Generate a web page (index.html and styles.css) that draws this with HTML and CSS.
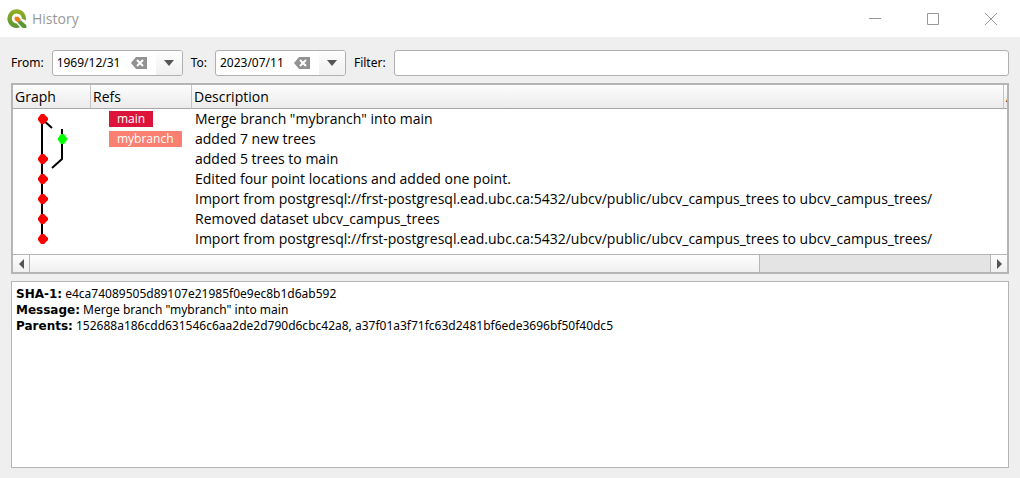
FILE: index.html
```
<!DOCTYPE html>
<html lang="en">
<head>
<meta charset="utf-8">
<title>History</title>
<link rel="stylesheet" href="styles.css">
</head>
<body>
<header class="titlebar">
  <svg class="logo" viewBox="0 0 20 20" aria-hidden="true">
    <defs><linearGradient id="ring" x1="0" y1="0" x2="0" y2="1"><stop offset="0" stop-color="#93b023"/><stop offset="1" stop-color="#589632"/></linearGradient></defs>
    <path fill="url(#ring)" d="M13 18.3A9.3 9.3 0 1 1 18.8 11.5L14.8 9.5A5 5 0 1 0 9.6 14.4Z"/>
    <path fill="#589632" d="M11.5 11.5h2.6l5.3 4.7v2.9h-3.7l-4.7-5z"/>
    <path fill="#ee7913" d="M7.7 7.7h3.5l2.6 2.8-3 3L7.7 11z"/>
  </svg>
  <h1 class="title">History</h1>
  <div class="window-controls">
    <button class="window-button" type="button" aria-label="Minimize"><svg width="12" height="12"><path d="M0 5.5h12"/></svg></button>
    <button class="window-button" type="button" aria-label="Maximize"><svg width="12" height="12"><path d="M.5.5h11v11H.5z"/></svg></button>
    <button class="window-button" type="button" aria-label="Close"><svg width="12" height="12"><path d="M0 0l12 12M12 0L0 12"/></svg></button>
  </div>
</header>
<main class="content">
  <form class="filters">
    <label for="from">From:</label>
    <div class="date">
      <input id="from" class="date-input" type="text" value="1969/12/31">
      <button class="clear" type="button" aria-label="Clear from date"><svg width="16" height="12"><path fill="#929292" d="M5 0h11v12H5L0 6z"/><path stroke="#fff" stroke-width="2" d="M6 3l6 6M12 3l-6 6"/></svg></button>
      <button class="drop" type="button" aria-label="Choose from date"><svg width="10" height="6"><path fill="#555" d="M0 0h10L5 6z"/></svg></button>
    </div>
    <label for="to">To:</label>
    <div class="date">
      <input id="to" class="date-input" type="text" value="2023/07/11">
      <button class="clear" type="button" aria-label="Clear to date"><svg width="16" height="12"><path fill="#929292" d="M5 0h11v12H5L0 6z"/><path stroke="#fff" stroke-width="2" d="M6 3l6 6M12 3l-6 6"/></svg></button>
      <button class="drop" type="button" aria-label="Choose to date"><svg width="10" height="6"><path fill="#555" d="M0 0h10L5 6z"/></svg></button>
    </div>
    <label for="filter">Filter:</label>
    <input id="filter" class="filter-input" type="text">
  </form>
  <section class="log">
    <table class="commits">
      <colgroup><col class="col-graph"><col class="col-refs"><col><col class="col-author"></colgroup>
      <thead><tr><th>Graph</th><th>Refs</th><th>Description</th><th>Author</th></tr></thead>
      <tbody>
        <tr><td><svg class="graph"><path class="edge" d="M29 10v10M29 10l10 9"/><path class="dot" d="M28 5h3l4 4v2l-4 4h-3l-3-4V9z"/></svg></td><td><span class="ref ref-main">main</span></td><td>Merge branch "mybranch" into main</td><td></td></tr>
        <tr><td><svg class="graph"><path class="edge" d="M29 0v20M49 0v20"/><path class="dot dot-branch" d="M48 5h3l3 4v2l-3 4h-3l-3-4V9z"/></svg></td><td><span class="ref ref-branch">mybranch</span></td><td>added 7 new trees</td><td></td></tr>
        <tr><td><svg class="graph"><path class="edge" d="M29 0v20M49 0v10l-10 9"/><path class="dot" d="M28 5h3l4 4v2l-4 4h-3l-3-4V9z"/></svg></td><td></td><td>added 5 trees to main</td><td></td></tr>
        <tr><td><svg class="graph"><path class="edge" d="M29 0v20"/><path class="dot" d="M28 5h3l4 4v2l-4 4h-3l-3-4V9z"/></svg></td><td></td><td>Edited four point locations and added one point.</td><td></td></tr>
        <tr><td><svg class="graph"><path class="edge" d="M29 0v20"/><path class="dot" d="M28 5h3l4 4v2l-4 4h-3l-3-4V9z"/></svg></td><td></td><td>Import from postgresql://frst-postgresql.ead.ubc.ca:5432/ubcv/public/ubcv_campus_trees to ubcv_campus_trees/</td><td></td></tr>
        <tr><td><svg class="graph"><path class="edge" d="M29 0v20"/><path class="dot" d="M28 5h3l4 4v2l-4 4h-3l-3-4V9z"/></svg></td><td></td><td>Removed dataset ubcv_campus_trees</td><td></td></tr>
        <tr><td><svg class="graph"><path class="edge" d="M29 0v10"/><path class="dot" d="M28 5h3l4 4v2l-4 4h-3l-3-4V9z"/></svg></td><td></td><td>Import from postgresql://frst-postgresql.ead.ubc.ca:5432/ubcv/public/ubcv_campus_trees to ubcv_campus_trees/</td><td></td></tr>
      </tbody>
    </table>
    <div class="scrollbar">
      <button class="scroll-button" type="button" aria-label="Scroll left"><svg width="5" height="10"><path fill="#555" d="M5 0v10L0 5z"/></svg></button>
      <div class="track"><div class="thumb"></div></div>
      <button class="scroll-button scroll-right" type="button" aria-label="Scroll right"><svg width="5" height="10"><path fill="#555" d="M0 0v10l5-5z"/></svg></button>
    </div>
  </section>
  <section class="details">
    <p><b>SHA-1:</b> e4ca74089505d89107e21985f0e9ec8b1d6ab592</p>
    <p><b>Message:</b> Merge branch "mybranch" into main</p>
    <p><b>Parents:</b> 152688a186cdd631546c6aa2de2d790d6cbc42a8, a37f01a3f71fc63d2481bf6ede3696bf50f40dc5</p>
  </section>
</main>
</body>
</html>
```
FILE: styles.css
```
* { box-sizing: border-box; }
body {
  margin: 0;
  min-height: 100vh;
  display: flex;
  flex-direction: column;
  background: #efefef;
  color: #000;
  font: 12px/16px "Noto Sans", "Open Sans", sans-serif;
}
button { padding: 0; border: 0; background: none; display: flex; align-items: center; justify-content: center; }
input { font: inherit; color: inherit; outline: 0; }
svg { display: block; }
.titlebar { display: flex; align-items: center; height: 37px; padding-left: 7px; background: #fff; }
.logo { width: 20px; height: 20px; }
.title { margin: 0 0 0 5px; font: 14px/20px "Open Sans", sans-serif; color: #999; }
.window-controls { display: flex; margin-left: auto; height: 100%; }
.window-button { width: 58px; }
.window-button path { fill: none; stroke: #999; }
.content { flex: 1; display: flex; flex-direction: column; padding: 13px 11px 10px; }
.filters { display: flex; align-items: center; gap: 8px; }
.date { display: flex; width: 131px; height: 26px; border: 1px solid #b0b0b0; border-radius: 3px; background: #fff; overflow: hidden; }
.date-input { flex: 1; min-width: 0; padding: 0 0 0 4px; border: 0; background: none; }
.clear { width: 16px; margin-right: 9px; }
.drop { width: 26px; background: linear-gradient(#fdfdfd, #f0f0f0); }
.filter-input { flex: 1; min-width: 0; height: 26px; padding: 0 4px; border: 1px solid #b0b0b0; border-radius: 3px; background: #fff; }
.log { margin-top: 7px; border: 2px solid #b5b5b5; background: #fff; overflow: hidden; }
.commits { width: 100%; table-layout: fixed; border-collapse: separate; border-spacing: 0; margin-bottom: 5px; font: 14px/20px "Open Sans", sans-serif; }
.col-graph { width: 78px; }
.col-refs { width: 101px; }
.col-author { width: 3px; }
.commits th { height: 24px; padding: 2px 2px 1px; font-weight: 400; text-align: left; overflow: hidden; white-space: nowrap; background: linear-gradient(#fdfdfd, #ebebeb); border-right: 1px solid #c4c4c4; border-bottom: 1px solid #a8a8a8; }
.commits th:last-child { border-right: 0; padding-right: 0; }
.commits td { height: 20px; padding: 0 0 0 3px; white-space: nowrap; overflow: hidden; }
.commits td:first-child { padding: 0; }
.commits td:nth-child(2) { padding-left: 18px; }
.graph { width: 78px; height: 20px; }
.edge { fill: none; stroke: #000; stroke-width: 2; }
.dot { fill: #f00; }
.dot-branch { fill: #0f0; }
.ref { display: block; width: fit-content; height: 16px; padding: 0 8px; font-size: 12px; line-height: 16px; color: #fff; }
.ref-main { background: #dc143c; }
.ref-branch { background: #fa8072; }
.scrollbar { display: flex; height: 18px; border-top: 1px solid #b5b5b5; }
.scroll-button { width: 17px; border-right: 1px solid #b5b5b5; background: linear-gradient(#fdfdfd, #f0f0f0); }
.scroll-right { border-right: 0; border-left: 1px solid #b5b5b5; }
.track { flex: 1; background: #e4e4e4; }
.thumb { width: 76%; height: 100%; border-right: 1px solid #b5b5b5; background: linear-gradient(#fdfdfd, #f0f0f0); }
.details { flex: 1; margin-top: 7px; padding: 4px; border: 1px solid #b5b5b5; background: #fff; }
.details p { margin: 0; }
.details b { font-family: "DejaVu Sans", sans-serif; }
```
